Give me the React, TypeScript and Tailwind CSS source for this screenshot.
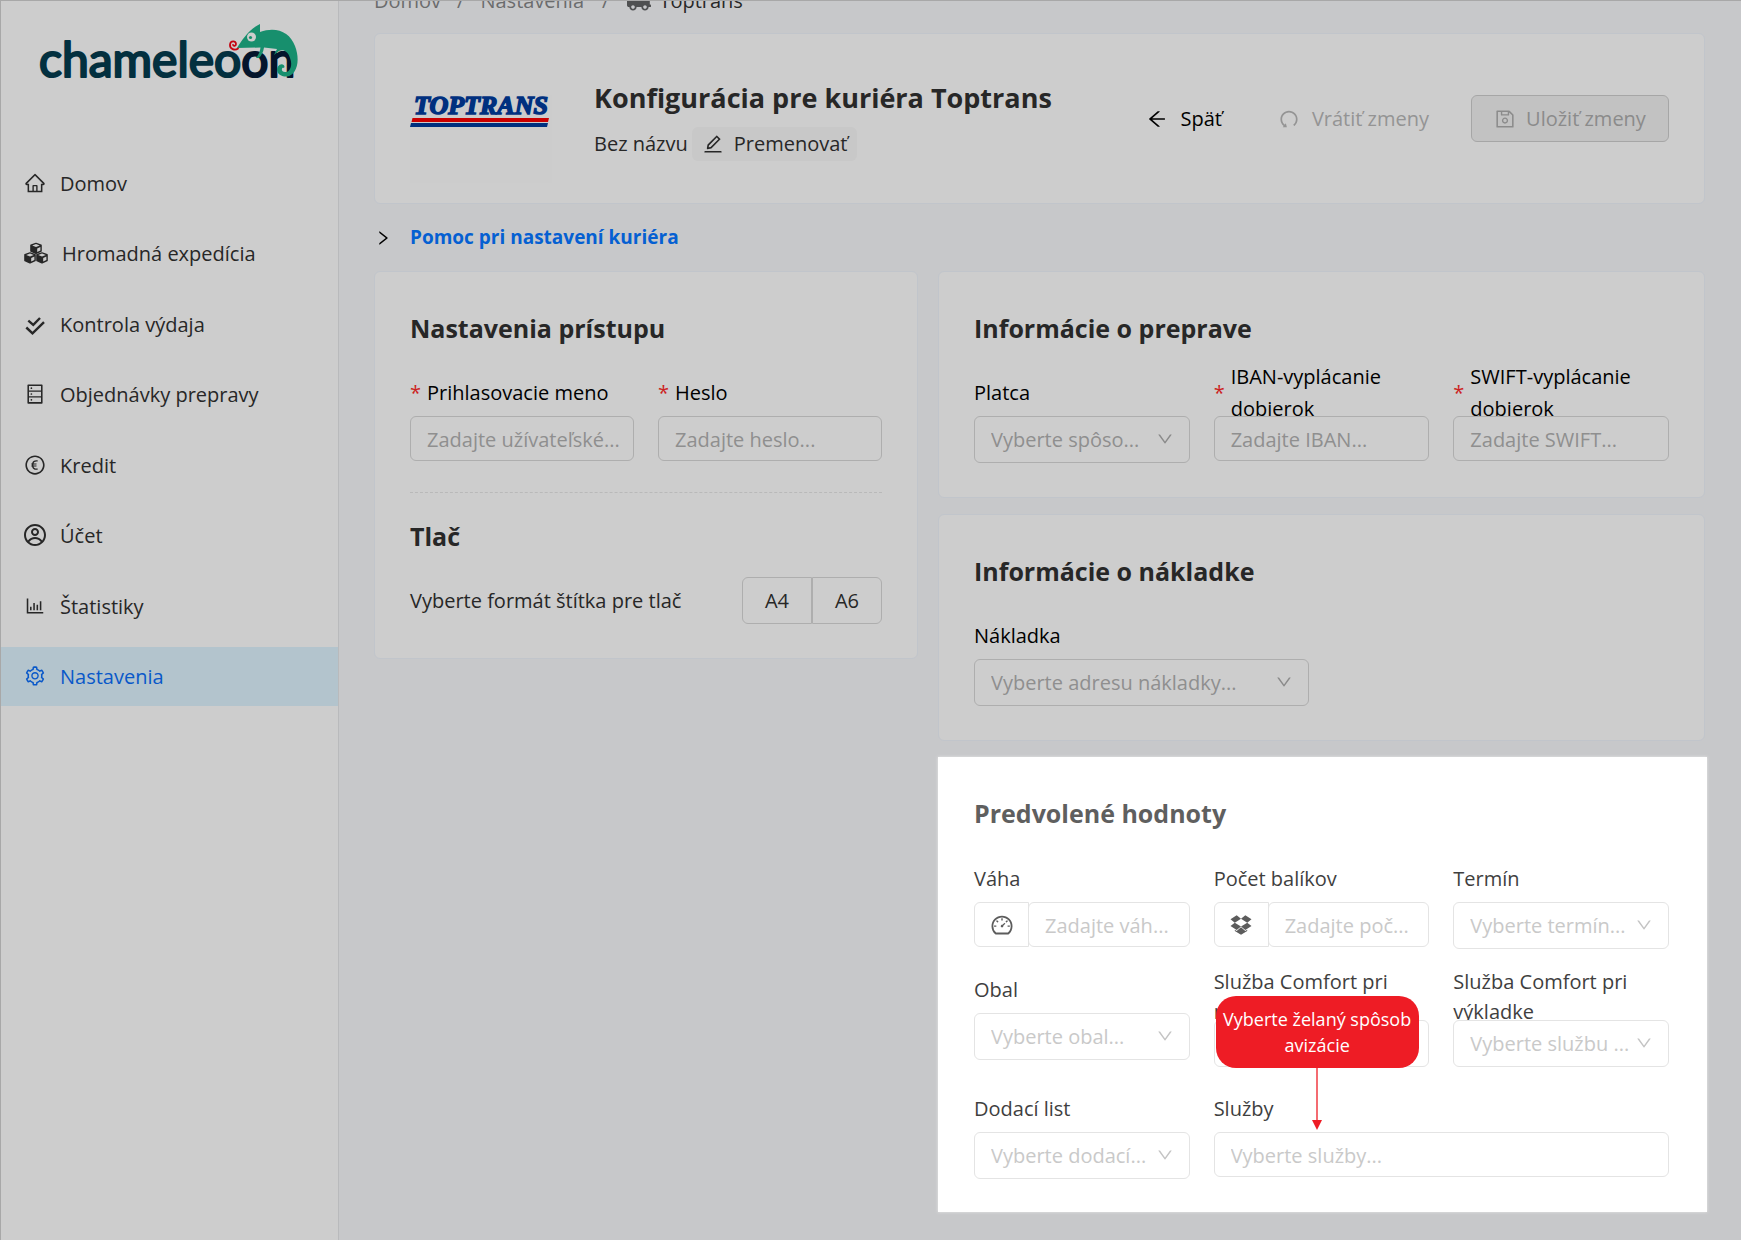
import type { ReactNode } from 'react';
import {
  AiOutlineArrowLeft,
  AiOutlineBarChart,
  AiOutlineDashboard,
  AiOutlineDatabase,
  AiOutlineDown,
  AiOutlineDropbox,
  AiOutlineEdit,
  AiOutlineEuroCircle,
  AiOutlineHome,
  AiOutlineRight,
  AiOutlineSave,
  AiOutlineSetting,
  AiOutlineUndo,
} from 'react-icons/ai';
import { FaTruck } from 'react-icons/fa';
import { CgProfile } from 'react-icons/cg';

function DoubleCheck({ className }: { className?: string }) {
  return (
    <svg viewBox="-1 -1 22 22" className={className} fill="none" stroke="currentColor" strokeWidth="2.4">
      <path d="M1.3 13.5l6.2 5.8L19 8.2M3.3 6.600l5 4.3L15 4" />
    </svg>
  );
}

const cubeSpots = ['translate(6 0)', 'translate(0 9.5)', 'translate(12 9.5)'];

function Cubes({ className }: { className?: string }) {
  return (
    <svg viewBox="0 -1 24 24" className={className}>
      {cubeSpots.map((spot) => (
        <g key={spot} transform={spot}>
          <path
            d="M6 1.500L11 3.300V9L6 11.300L1 9V3.300Z"
            fill="currentColor"
            stroke="currentColor"
            strokeWidth="1.600"
            strokeLinejoin="round"
          />
          <path d="M6 2L9.800 3.400L6 4.900L2.200 3.400Z" fill="#cdcdcd" />
          <path d="M7.200 6.400L10.400 5.100V8.600L7.200 10Z" fill="#cdcdcd" />
        </g>
      ))}
    </svg>
  );
}

const navItems = [
  { label: 'Domov', icon: AiOutlineHome, size: 'size-[22px]' },
  { label: 'Hromadná expedícia', icon: Cubes, size: 'size-6' },
  { label: 'Kontrola výdaja', icon: DoubleCheck, size: 'size-[22px]' },
  { label: 'Objednávky prepravy', icon: AiOutlineDatabase, size: 'size-[22px]' },
  { label: 'Kredit', icon: AiOutlineEuroCircle, size: 'size-[22px]' },
  { label: 'Účet', icon: CgProfile, size: '-mx-px size-6' },
  { label: 'Štatistiky', icon: AiOutlineBarChart, size: 'size-[22px]' },
  { label: 'Nastavenia', icon: AiOutlineSetting, size: 'size-[22px]', active: true },
];

function ChameleoonLogo() {
  return (
    <svg viewBox="0 0 280 75" className="h-[75px] w-[280px]">
      <text
        x="9"
        y="62"
        fontFamily="Lato, sans-serif"
        fontWeight="400"
        fontSize="48"
        fill="#03303f"
        stroke="#03303f"
        strokeWidth="2.200"
        strokeLinejoin="round"
      >
        chameleo
        <tspan fill="#04152c" stroke="#04152c">
          on
        </tspan>
      </text>
      <path
        d="M207 33C212 25 219 14 230 9V17C246 11 260 17 265 31C271 47 266 60 257 61.5C249 62 245 56 248 51.5C251 47 256 50 254 53C251 52 251 57 255 57C260 58 263 50 260 43C258 36 253 34 249 36L244 40L247 34L234 32.500Q233 39 229 43H226Q230 38 230.500 32.500Z"
        fill="#178f6d"
      />
      <circle cx="221.500" cy="22" r="4.500" fill="#cdcdcd" />
      <circle cx="220.500" cy="22.500" r="1.600" fill="#178f6d" />
      <path
        d="M208 33.500C205 36 199.500 34 200 29.500C200.500 25.500 206 25.500 206 29C206 31 203.500 31.500 203 29.800"
        fill="none"
        stroke="#c40512"
        strokeWidth="1.800"
        strokeLinecap="round"
      />
    </svg>
  );
}

function ToptransLogo() {
  return (
    <svg viewBox="0 0 142 34" className="h-[34px] w-[142px]">
      <text
        x="4"
        y="19"
        fontFamily="'Liberation Serif', serif"
        fontWeight="700"
        fontStyle="italic"
        fontSize="26"
        fill="#00307f"
        stroke="#00307f"
        strokeWidth="1.600"
      >
        TOPTRANS
      </text>
      <path d="M2.500 23H139l-1 4H1.500z" fill="#cb0000" />
      <path d="M1 28h137l-1 4H0z" fill="#00307f" />
    </svg>
  );
}

function Card({ title, children }: { title: string; children: ReactNode }) {
  return (
    <section className="rounded-md border border-[#c1c5cb] bg-[#cdcdcd] px-[35px] pt-9 pb-[34px]">
      <h2 className="text-[25px] leading-10 font-bold text-[#272727]">{title}</h2>
      {children}
    </section>
  );
}

interface FieldProps {
  id: string;
  label: string;
  placeholder: string;
  required?: boolean;
  light?: boolean;
  icon?: ReactNode;
  className?: string;
}

function FieldLabel({ id, label, required, light }: { id: string; label: string; required?: boolean; light?: boolean }) {
  return (
    <label
      htmlFor={id}
      className={`flex h-12 items-center pt-0.5 ${light ? 'leading-[30px] text-[#3f3f3f]' : 'leading-8 text-black'}`}
    >
      {required && <span className="mr-[6px] text-[#cc1f22]">*</span>}
      <span>{label}</span>
    </label>
  );
}

function InputField({ id, label, placeholder, required, light, icon, className }: FieldProps) {
  return (
    <div className={className}>
      <FieldLabel id={id} label={label} required={required} light={light} />
      <div className="flex">
        {icon && (
          <span className="-mr-px flex w-[55px] shrink-0 items-center justify-center rounded-l-md border border-[#e4e4e4] text-2xl text-[#5c5c5c]">
            {icon}
          </span>
        )}
        <input
          id={id}
          placeholder={placeholder}
          className={`h-[45px] w-full min-w-0 rounded-md border pt-0.5 pr-2 pl-4 text-ellipsis outline-none ${
            light
              ? 'border-[#e4e4e4] bg-white placeholder:text-[#c9c9c9]'
              : 'border-[#aeaeae] bg-transparent placeholder:text-[#8f8f8f]'
          }`}
        />
      </div>
    </div>
  );
}

function SelectField({ id, label, placeholder, light, className }: FieldProps) {
  return (
    <div className={className}>
      <FieldLabel id={id} label={label} light={light} />
      <div className="relative">
        <select
          id={id}
          className={`h-[47px] w-full appearance-none rounded-md border pr-8 pl-4 text-ellipsis outline-none ${
            light ? 'border-[#e4e4e4] bg-white text-[#c9c9c9]' : 'border-[#aeaeae] bg-transparent text-[#8f8f8f]'
          }`}
        >
          <option>{placeholder}</option>
        </select>
        <AiOutlineDown
          className={`pointer-events-none absolute top-[14px] right-4 size-[18px] ${light ? 'text-[#c4c4c4]' : 'text-[#8a8a8a]'}`}
        />
      </div>
    </div>
  );
}

function Callout({ children }: { children: ReactNode }) {
  return (
    <div className="absolute top-6 left-0.5 w-[203px]">
      <div className="flex h-[72px] items-center justify-center rounded-[20px] bg-[#ee1c25] text-center text-lg leading-[26px] text-white">
        {children}
      </div>
      <svg viewBox="0 0 12 62" className="mx-auto h-[62px] w-3">
        <path d="M6 0v54" stroke="#ee1c25" strokeWidth="1.300" />
        <path d="M1 52h10L6 62z" fill="#ee1c25" />
      </svg>
    </div>
  );
}

export default function App() {
  return (
    <div className="flex min-h-screen overflow-hidden border-t border-l border-[#a8a8a8] bg-[#c7c8ca] font-['Open_Sans','Noto_Sans',sans-serif] text-[20px] text-[#272727]">
      <aside className="w-[338px] shrink-0 border-r border-[#b9babc] bg-[#cdcdcd]">
        <div className="h-[152px] pt-[14px] pl-[29px]">
          <ChameleoonLogo />
        </div>
        <nav className="flex h-[553px] flex-col justify-between">
          {navItems.map(({ label, icon: Icon, size, active }) => (
            <a
              key={label}
              href="#"
              className={`flex h-[59px] items-center gap-[14px] pl-[23px] ${active ? 'bg-[#b3c4cd] text-[#0958c9]' : ''}`}
            >
              <Icon className={size} />
              <span className="pt-0.5">{label}</span>
            </a>
          ))}
        </nav>
      </aside>

      <main className="min-w-0 flex-1 pr-9 pl-[35px]">
        <div className="h-8 overflow-hidden">
          <nav className="-mt-4 flex h-8 items-center text-[#6b6c6d]">
            <a href="#">Domov</a>
            <span className="mx-4">/</span>
            <a href="#">Nastavenia</a>
            <span className="mx-[18px]">/</span>
            <FaTruck className="mr-2 size-6 text-[#4f5051]" />
            <span className="text-[#272727]">Toptrans</span>
          </nav>
        </div>

        <header className="flex h-[171px] items-center rounded-md border border-[#c1c5cb] bg-[#cdcdcd] px-[35px]">
          <div className="mt-10 h-[88px] w-[142px] bg-[#cccccc]">
            <ToptransLogo />
          </div>
          <div className="ml-[42px] flex-1">
            <h1 className="mt-px text-[27px] leading-10 font-bold">Konfigurácia pre kuriéra Toptrans</h1>
            <div className="mt-[9px] flex items-center gap-1">
              <span>Bez názvu</span>
              <button className="flex h-[34px] items-center gap-[10px] rounded-md bg-[#c8c8c8] px-[10px]">
                <AiOutlineEdit className="size-[22px]" />
                Premenovať
              </button>
            </div>
          </div>
          <div className="flex items-center">
            <button className="flex items-center gap-3 text-black">
              <AiOutlineArrowLeft className="size-[22px]" />
              Späť
            </button>
            <button disabled className="ml-14 flex items-center gap-3 text-[#949494]">
              <AiOutlineUndo className="size-[22px]" />
              Vrátiť zmeny
            </button>
            <button
              disabled
              className="ml-[42px] flex h-[47px] w-[198px] items-center justify-center gap-[10px] rounded-md border border-[#a6a6a6] bg-[#c2c2c2] text-[#8b8b8b]"
            >
              <AiOutlineSave className="size-[22px]" />
              Uložiť zmeny
            </button>
          </div>
        </header>

        <button className="flex h-[67px] items-center gap-[18px] text-[19px] font-bold text-[#0560d2]">
          <AiOutlineRight className="size-[18px] text-black" />
          Pomoc pri nastavení kuriéra
        </button>

        <div className="grid grid-cols-[544fr_767fr] items-start gap-5">
          <Card title="Nastavenia prístupu">
            <div className="mt-5 grid grid-cols-2 gap-6">
              <InputField id="login" label="Prihlasovacie meno" placeholder="Zadajte užívateľské..." required />
              <InputField id="password" label="Heslo" placeholder="Zadajte heslo..." required />
            </div>
            <hr className="mt-[31px] border-t border-dashed border-[#b9b9b9]" />
            <h2 className="mt-6 text-[25px] leading-[38px] font-bold">Tlač</h2>
            <div className="mt-[22px] flex items-center justify-between">
              <span>Vyberte formát štítka pre tlač</span>
              <div className="flex h-[47px]">
                <button className="w-[70px] rounded-l-md border border-[#aeaeae]">A4</button>
                <button className="w-[70px] rounded-r-md border border-[#aeaeae]">A6</button>
              </div>
            </div>
          </Card>

          <div className="flex flex-col gap-4">
            <Card title="Informácie o preprave">
              <div className="mt-5 grid grid-cols-3 gap-6">
                <SelectField id="payer" label="Platca" placeholder="Vyberte spôso..." />
                <InputField id="iban" label="IBAN-vyplácanie dobierok" placeholder="Zadajte IBAN..." required />
                <InputField id="swift" label="SWIFT-vyplácanie dobierok" placeholder="Zadajte SWIFT..." required />
              </div>
            </Card>

            <Card title="Informácie o nákladke">
              <div className="mt-5">
                <SelectField id="loading" label="Nákladka" placeholder="Vyberte adresu nákladky..." className="w-[335px]" />
              </div>
            </Card>

            <section className="-mr-0.5 bg-white pt-9 pr-[38px] pb-[33px] pl-9 shadow-[0_0_3px_#e8e8e8]">
              <h2 className="text-[25px] leading-10 font-bold text-[#5f5f5f]">Predvolené hodnoty</h2>
              <div className="mt-[21px] grid grid-cols-3 gap-x-6">
                <InputField id="weight" label="Váha" placeholder="Zadajte váh..." icon={<AiOutlineDashboard />} light />
                <InputField id="parcels" label="Počet balíkov" placeholder="Zadajte poč..." icon={<AiOutlineDropbox />} light />
                <SelectField id="term" label="Termín" placeholder="Vyberte termín..." light />
                <SelectField id="package" label="Obal" placeholder="Vyberte obal..." light className="mt-4" />
                <div className="relative mt-[23px]">
                  <SelectField id="comfort-load" label="Služba Comfort pri nakládke" placeholder="" light />
                  <Callout>Vyberte želaný spôsob avizácie</Callout>
                </div>
                <SelectField
                  id="comfort-unload"
                  label="Služba Comfort pri výkladke"
                  placeholder="Vyberte službu ..."
                  light
                  className="mt-[23px]"
                />
                <SelectField id="note" label="Dodací list" placeholder="Vyberte dodací..." light className="mt-[17px]" />
                <InputField id="services" label="Služby" placeholder="Vyberte služby..." light className="col-span-2 mt-[17px]" />
              </div>
            </section>
          </div>
        </div>
      </main>
    </div>
  );
}
